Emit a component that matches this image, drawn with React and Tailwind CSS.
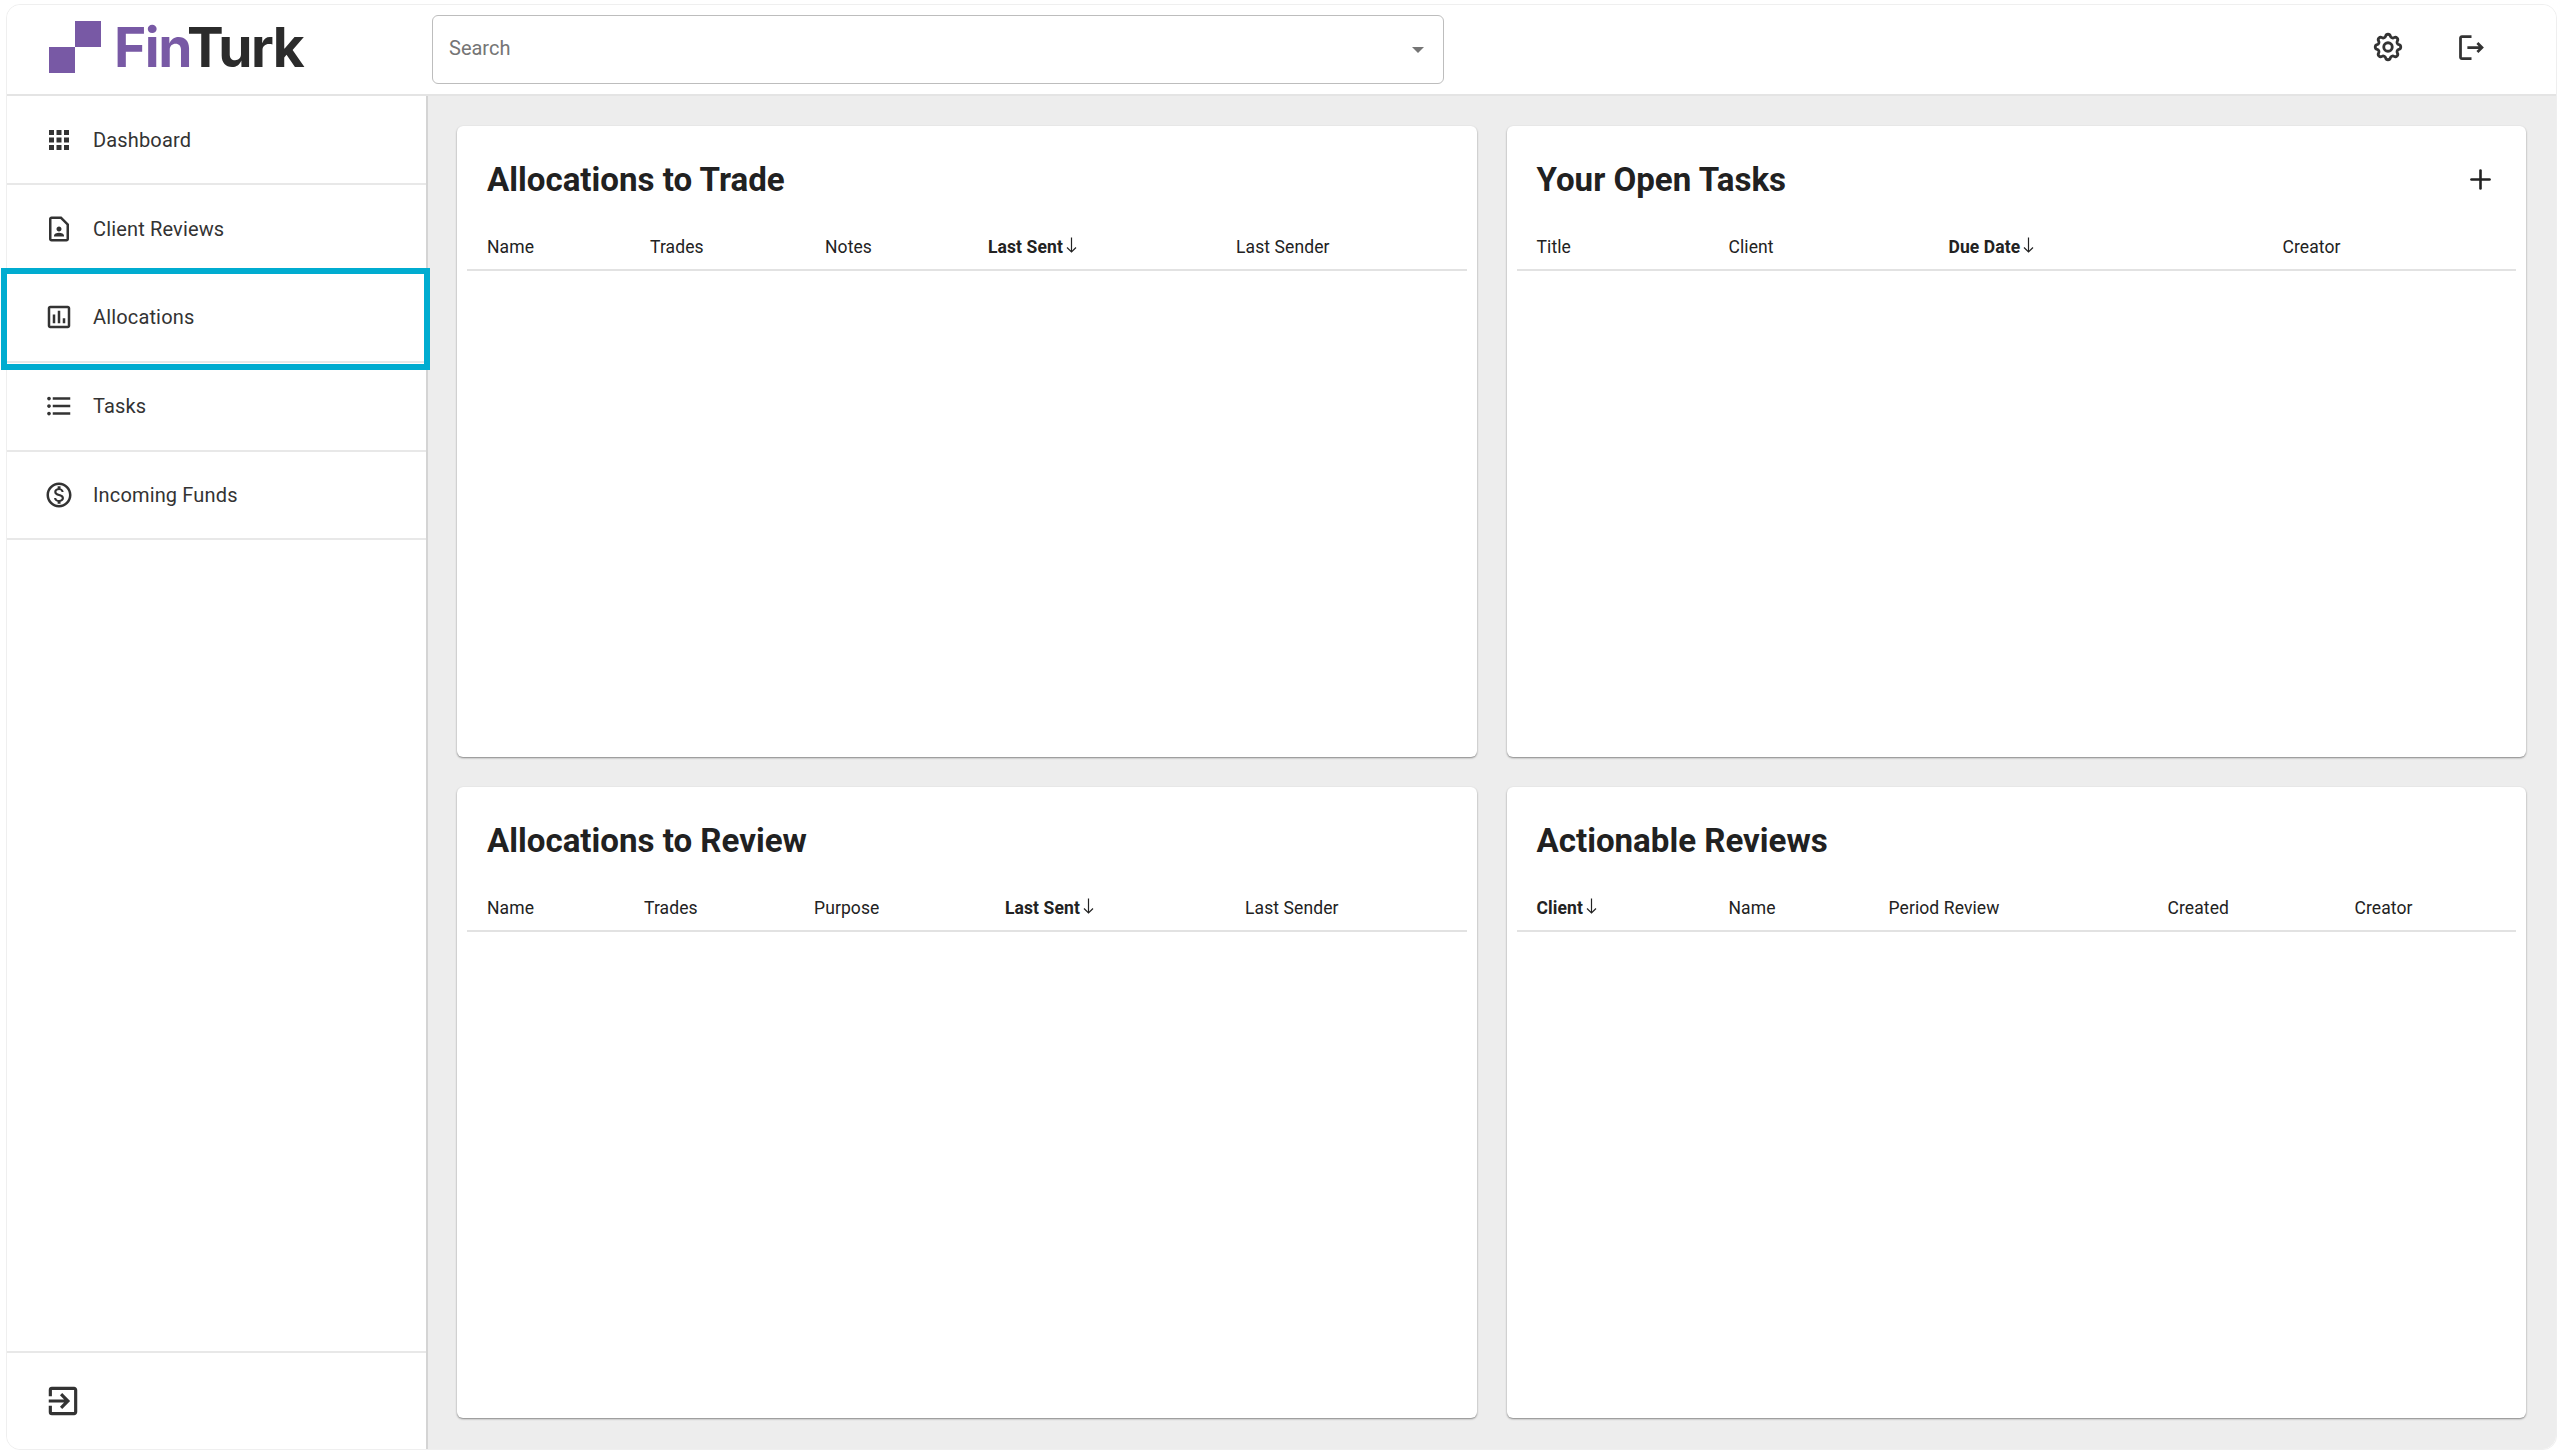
import { Plus } from "lucide-react";
import {
  MdOutlineContactPage,
  MdOutlineAssessment,
  MdFormatListBulleted,
  MdOutlineMonetizationOn,
  MdOutlineExitToApp,
  MdOutlineLogout,
} from "react-icons/md";
import { TbSettings } from "react-icons/tb";

function GridIcon() {
  return (
    <svg width="20" height="20" viewBox="0 0 20 20" fill="#333333" className="ml-[5px]">
      {[0, 7.5, 15].map((y) =>
        [0, 7.5, 15].map((x) => <rect key={`${x}-${y}`} x={x} y={y} width="5" height="5" />)
      )}
    </svg>
  );
}

const navItems = [
  { label: "Dashboard", icon: <GridIcon /> },
  { label: "Client Reviews", icon: <MdOutlineContactPage size={30} color="#333333" /> },
  { label: "Allocations", icon: <MdOutlineAssessment size={30} color="#333333" />, active: true },
  { label: "Tasks", icon: <MdFormatListBulleted size={30} color="#333333" /> },
  { label: "Incoming Funds", icon: <MdOutlineMonetizationOn size={30} color="#333333" /> },
];

const cards = [
  {
    title: "Allocations to Trade",
    columns: [
      { label: "Name", width: "w-[163px]" },
      { label: "Trades", width: "w-[175px]" },
      { label: "Notes", width: "w-[163px]" },
      { label: "Last Sent", width: "w-[248px]", sorted: true },
      { label: "Last Sender", width: "w-[200px]" },
    ],
  },
  {
    title: "Your Open Tasks",
    add: true,
    columns: [
      { label: "Title", width: "w-[192px]" },
      { label: "Client", width: "w-[220px]" },
      { label: "Due Date", width: "w-[334px]", sorted: true },
      { label: "Creator", width: "w-[200px]" },
    ],
  },
  {
    title: "Allocations to Review",
    columns: [
      { label: "Name", width: "w-[157px]" },
      { label: "Trades", width: "w-[170px]" },
      { label: "Purpose", width: "w-[191px]" },
      { label: "Last Sent", width: "w-[240px]", sorted: true },
      { label: "Last Sender", width: "w-[200px]" },
    ],
  },
  {
    title: "Actionable Reviews",
    columns: [
      { label: "Client", width: "w-[192px]", sorted: true },
      { label: "Name", width: "w-[160px]" },
      { label: "Period Review", width: "w-[279px]" },
      { label: "Created", width: "w-[187px]" },
      { label: "Creator", width: "w-[120px]" },
    ],
  },
];

function SortArrow() {
  return (
    <svg width="11" height="16" viewBox="0 0 11 16" fill="none" stroke="#222222" strokeWidth="1.2" className="ml-[3px] -mt-[5px]">
      <path d="M5.5 0.5V15M1 10.5L5.5 15L10 10.5" />
    </svg>
  );
}

function Card({ title, columns, add }) {
  return (
    <div className="bg-white rounded-[6px] shadow-[0_1px_2px_rgba(0,0,0,0.45)] px-[10px] min-h-0">
      <div className="h-[107px] pl-[20px] pr-[10px] flex items-center justify-between">
        <h2 className="text-[33.1px] font-bold text-[#212121]">{title}</h2>
        {add && <Plus size={31} color="#222222" strokeWidth={2} className="mr-[10px] -mt-[1px]" />}
      </div>
      <div className="h-[38px] pl-[20px] pt-[1px] flex items-start border-b-2 border-[#e2e2e2] text-[17.5px] leading-[27px] tracking-[0.1px] text-[#222222]">
        {columns.map((col) => (
          <div key={col.label} className={`${col.width} flex items-center whitespace-nowrap ${col.sorted ? "font-bold" : ""}`}>
            {col.label}
            {col.sorted && <SortArrow />}
          </div>
        ))}
      </div>
    </div>
  );
}

export default function App() {
  return (
    <div className="w-full h-[1454px] bg-white pl-[6px] pr-[4px] pt-[4px] pb-[4px] font-['Roboto',sans-serif]">
      <div className="h-full flex flex-col rounded-[14px] border border-[#efefef]">
        {/* top bar */}
        <header className="h-[91px] flex-none flex items-center border-b-2 border-[#e4e4e4] bg-white rounded-t-[14px]">
          <div className="w-[425px] flex-none flex items-center pl-[42px] -mt-[6px]">
            <div className="w-[52px] h-[52px] grid grid-cols-2 grid-rows-2 flex-none">
              <div />
              <div className="bg-[#7859a5]" />
              <div className="bg-[#7859a5]" />
              <div />
            </div>
            <div className="ml-[13px] pt-[2px] text-[55px] leading-none font-bold font-['Inter',sans-serif] tracking-[-1.5px]">
              <span className="text-[#7859a5]">Fin</span>
              <span className="text-[#2b2b2b]">Turk</span>
            </div>
          </div>
          <div className="w-[1012px] h-[69px] flex-none flex items-center justify-between border border-[#bdbdbd] rounded-[6px] pl-[16px] pr-[19px]">
            <span className="text-[20px] text-[#757575] pb-[3px]">Search</span>
            <div className="w-0 h-0 border-l-[6px] border-r-[6px] border-t-[6px] border-l-transparent border-r-transparent border-t-[#757575] mt-[1px]" />
          </div>
          <div className="flex-1 flex items-center justify-end pr-[68px] gap-[50px] -mt-[5px]">
            <TbSettings size={34} color="#333333" />
            <MdOutlineLogout size={33} color="#333333" />
          </div>
        </header>

        <div className="flex-1 flex min-h-0">
          {/* side nav */}
          <aside className="w-[421px] flex-none flex flex-col justify-between bg-white border-r-2 border-[#d4d4d4] rounded-bl-[14px]">
            <nav className="pt-[0.5px]">
              {navItems.map((item) => (
                <div key={item.label} className="relative h-[88.75px] flex items-center border-b-2 border-[#e8e8e8]">
                  <div className="w-[86px] flex-none flex items-center pl-[37px]">{item.icon}</div>
                  <span className="text-[20px] tracking-[0.15px] text-[#333333]">{item.label}</span>
                  {item.active && (
                    <div className="absolute -left-[6px] -right-[4px] -top-[6px] -bottom-[9px] border-[6px] border-[#00acd0] z-10" />
                  )}
                </div>
              ))}
            </nav>
            <div className="h-[98px] flex items-center border-t-2 border-[#e8e8e8] pl-[37px]">
              <MdOutlineExitToApp size={38} color="#333333" />
            </div>
          </aside>

          {/* dashboard cards */}
          <main className="flex-1 min-w-0 bg-[#ededed] grid grid-cols-2 grid-rows-2 gap-[30px] pt-[30px] pb-[31px] pl-[29px] pr-[30px] rounded-br-[14px]">
            {cards.map((card) => (
              <Card key={card.title} {...card} />
            ))}
          </main>
        </div>
      </div>
    </div>
  );
}
